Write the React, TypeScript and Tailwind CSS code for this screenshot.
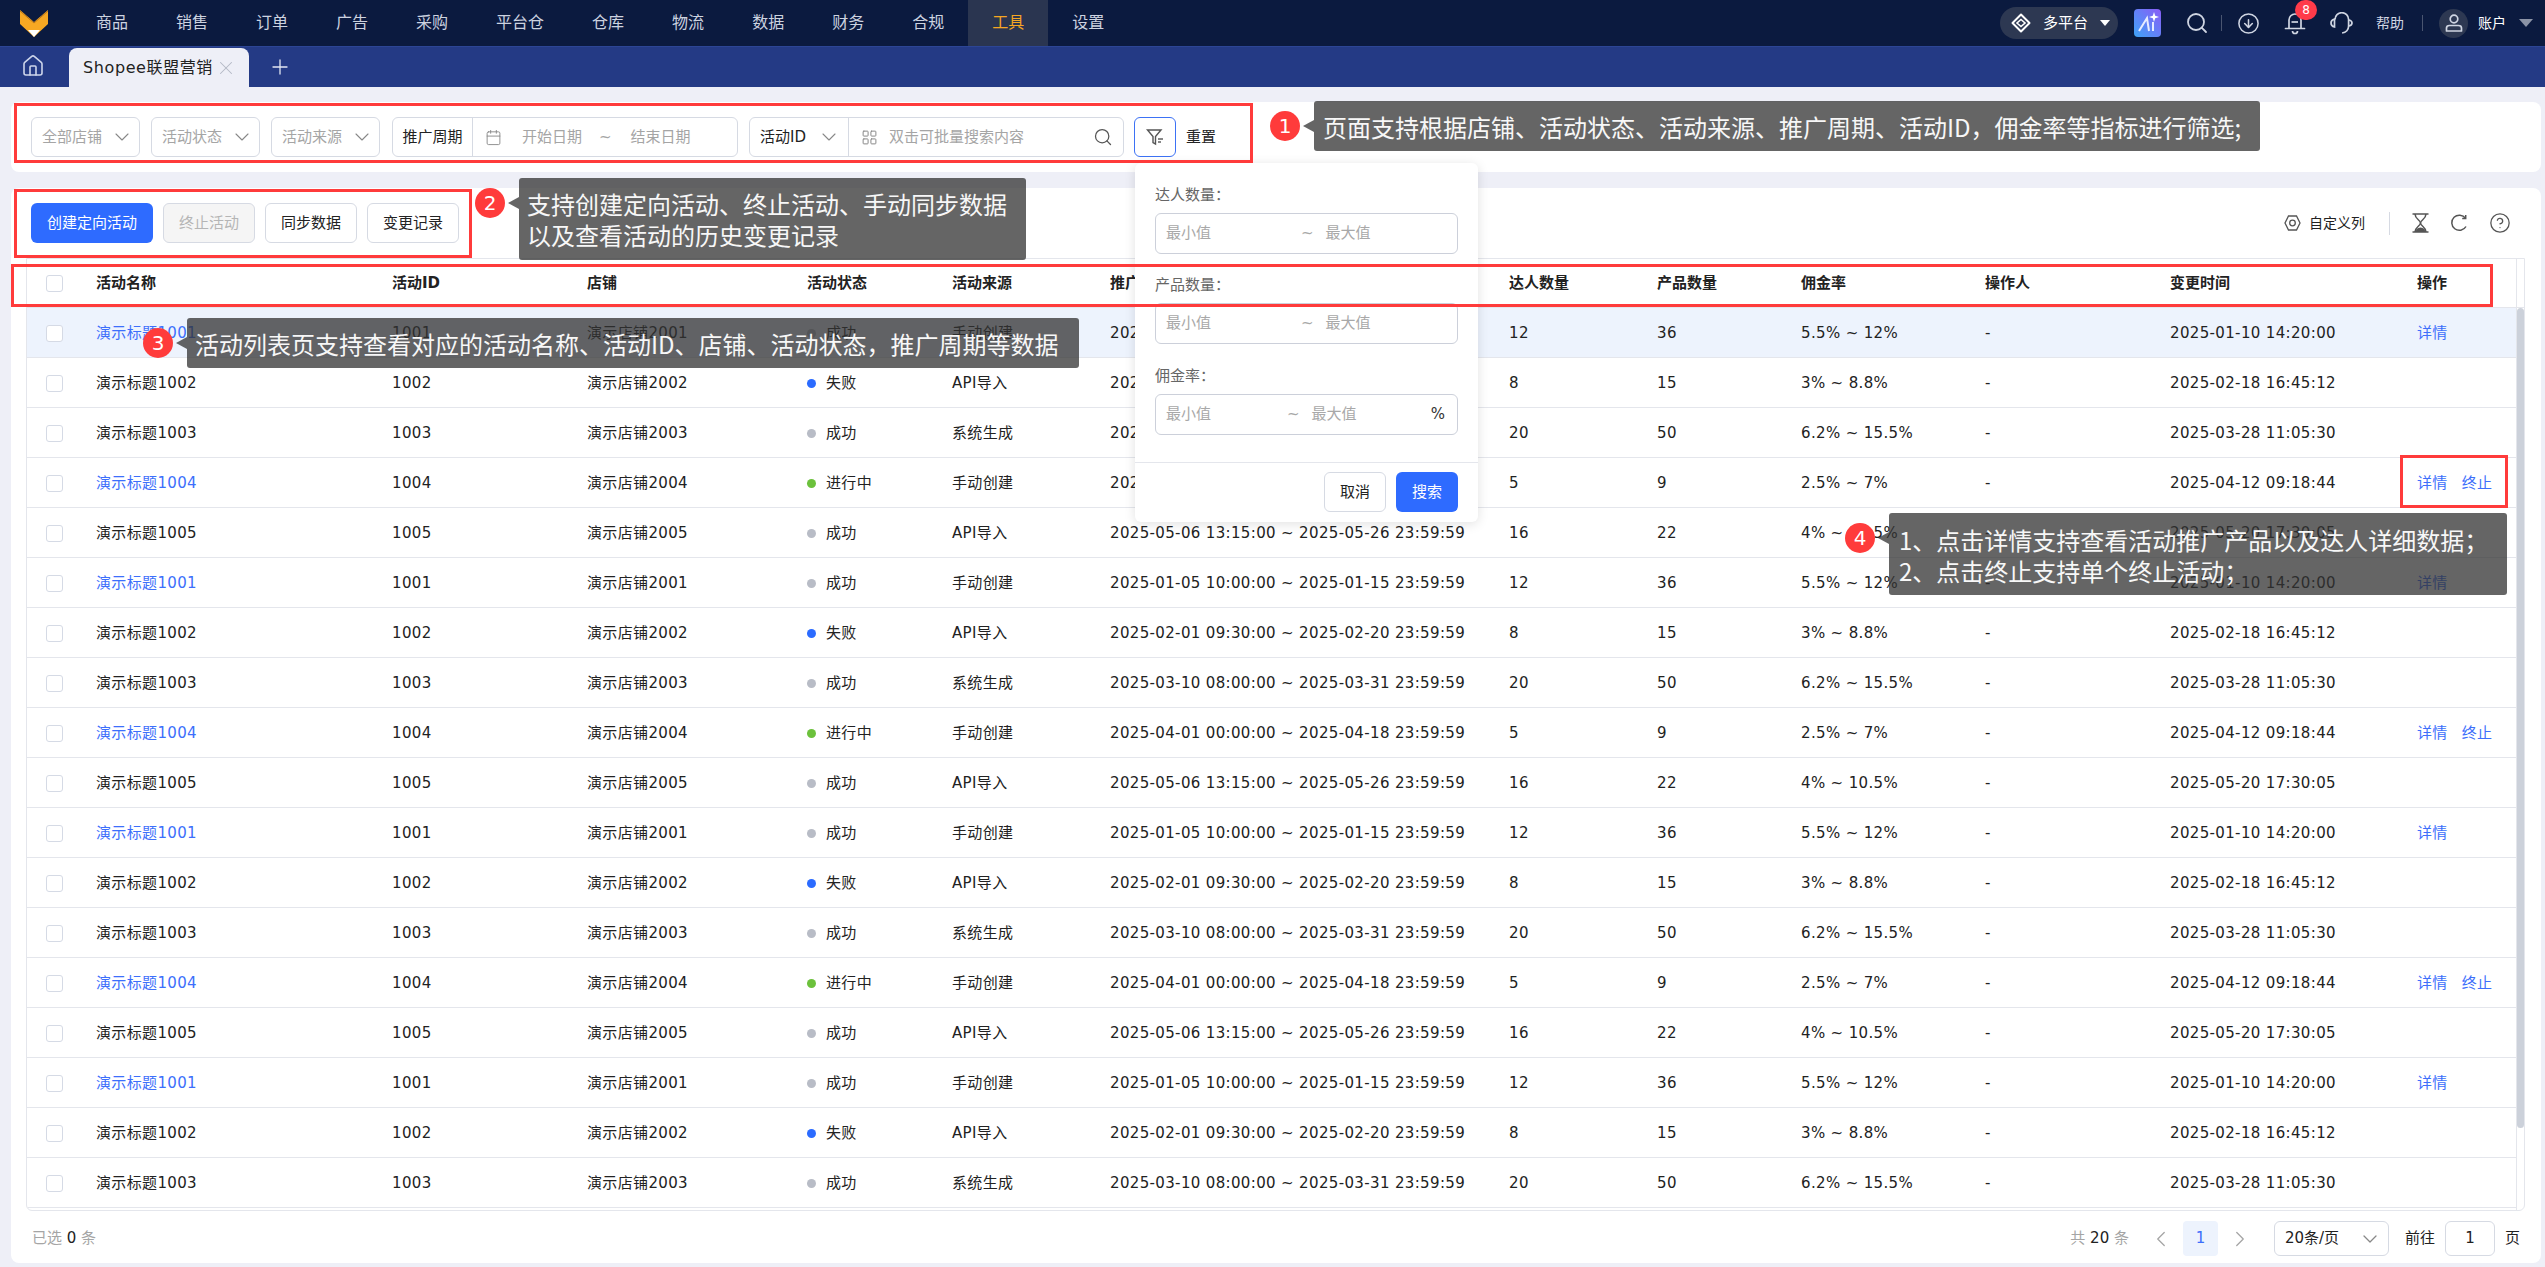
import {
  Calendar,
  ChevronDown,
  ChevronLeft,
  ChevronRight,
  CircleArrowDown,
  CircleHelp,
  House,
  LayoutGrid,
  Plus,
  Search,
  X,
} from "lucide-react";

const navItems = ["商品", "销售", "订单", "广告", "采购", "平台仓", "仓库", "物流", "数据", "财务", "合规", "工具", "设置"];

const rowCols =
  "grid grid-cols-[53px_296px_195px_220px_145px_158px_399px_148px_144px_184px_185px_247px_115px] items-center";

const headers = ["活动名称", "活动ID", "店铺", "活动状态", "活动来源", "推广周期", "达人数量", "产品数量", "佣金率", "操作人", "变更时间", "操作"];

const samples = [
  { id: "1001", link: true, status: "成功", dot: "bg-[#b8bcc6]", source: "手动创建", period: "2025-01-05 10:00:00 ~ 2025-01-15 23:59:59", people: 12, products: 36, rate: "5.5% ~ 12%", time: "2025-01-10 14:20:00", detail: true, stop: false },
  { id: "1002", link: false, status: "失败", dot: "bg-[#2b6bff]", source: "API导入", period: "2025-02-01 09:30:00 ~ 2025-02-20 23:59:59", people: 8, products: 15, rate: "3% ~ 8.8%", time: "2025-02-18 16:45:12", detail: false, stop: false },
  { id: "1003", link: false, status: "成功", dot: "bg-[#b8bcc6]", source: "系统生成", period: "2025-03-10 08:00:00 ~ 2025-03-31 23:59:59", people: 20, products: 50, rate: "6.2% ~ 15.5%", time: "2025-03-28 11:05:30", detail: false, stop: false },
  { id: "1004", link: true, status: "进行中", dot: "bg-[#6cc13c]", source: "手动创建", period: "2025-04-01 00:00:00 ~ 2025-04-18 23:59:59", people: 5, products: 9, rate: "2.5% ~ 7%", time: "2025-04-12 09:18:44", detail: true, stop: true },
  { id: "1005", link: false, status: "成功", dot: "bg-[#b8bcc6]", source: "API导入", period: "2025-05-06 13:15:00 ~ 2025-05-26 23:59:59", people: 16, products: 22, rate: "4% ~ 10.5%", time: "2025-05-20 17:30:05", detail: false, stop: false },
];

const rows = Array.from({ length: 18 }, (_, i) => samples[i % 5]);

function Logo() {
  return (
    <svg width="28" height="27" viewBox="0 0 28 27" className="ml-5">
      <polygon points="0,0 14,12 28,0 28,14 14,27 0,14" fill="#f7a823" />
      <polyline points="0,1 14,13 28,1" fill="none" stroke="#b9761a" strokeWidth="1" />
      <polygon points="8,20 20,20 14,27" fill="#ffffff" />
    </svg>
  );
}

function PlatformIcon() {
  return (
    <svg width="20" height="20" viewBox="0 0 20 20" fill="none" stroke="#ffffff" strokeWidth="2">
      <polygon points="10,1.5 18.5,10 10,18.5 1.5,10" strokeLinejoin="round" />
      <polygon points="10,6.5 14,10 10,13.5 6,10" strokeWidth="1.6" />
    </svg>
  );
}

function AiIcon() {
  return (
    <svg width="27" height="28" viewBox="0 0 27 28" className="ml-4">
      <defs>
        <linearGradient id="ai-bg" x1="0" y1="1" x2="1" y2="0">
          <stop offset="0" stopColor="#3ea4f8" />
          <stop offset="1" stopColor="#8a5cf6" />
        </linearGradient>
      </defs>
      <rect width="27" height="28" rx="4" fill="url(#ai-bg)" />
      <path d="M5 22 L13 9 L15 22" fill="none" stroke="#e6ecff" strokeWidth="2" />
      <line x1="19" y1="13" x2="19" y2="22" stroke="#e6ecff" strokeWidth="2" />
      <path d="M20 3 L21.2 6.8 L25 8 L21.2 9.2 L20 13 L18.8 9.2 L15 8 L18.8 6.8 Z" fill="#ffffff" />
    </svg>
  );
}

function BellIcon() {
  return (
    <svg width="22" height="24" viewBox="0 0 22 24" fill="none" stroke="currentColor" strokeWidth="1.7">
      <path d="M5 17 V9 a6 6 0 0 1 12 0 V17" />
      <line x1="1.5" y1="17.5" x2="20.5" y2="17.5" strokeLinecap="round" />
      <line x1="7.5" y1="11" x2="14" y2="11" />
      <path d="M8.5 20 a2.5 2.5 0 0 0 5 0" />
    </svg>
  );
}

function HeadsetIcon() {
  return (
    <svg width="23" height="22" viewBox="0 0 23 22" fill="none" stroke="currentColor" strokeWidth="1.7" className="ml-6">
      <path d="M5 7.5 a6.8 6.8 0 0 1 13.6 0 V14 c0 3.5 -2.5 6.5 -6.5 7" />
      <path d="M4.5 7 C2.5 7.5 1 9 1 11 S2.5 14.5 4.5 15 Z" />
      <path d="M19 8 C21 8.5 22 9.5 22 11 S21 13.5 19 14" />
    </svg>
  );
}

function UserIcon() {
  return (
    <svg width="18" height="18" viewBox="0 0 18 18" fill="none" stroke="#cfd5e2" strokeWidth="1.7">
      <circle cx="9" cy="5" r="3.8" />
      <path d="M1.5 17 V14 Q1.5 11.5 4.5 11.5 H13.5 Q16.5 11.5 16.5 14 V17 Z" strokeLinejoin="round" />
    </svg>
  );
}

function HexIcon() {
  return (
    <svg width="17" height="16" viewBox="0 0 17 16" fill="none" stroke="#555" strokeWidth="1.3">
      <polygon points="4.5,1 12.5,1 16,8 12.5,15 4.5,15 1,8" />
      <circle cx="8.5" cy="8" r="2.8" />
    </svg>
  );
}

function FilterIcon() {
  return (
    <svg width="18" height="18" viewBox="0 0 18 18" fill="none" stroke="#555" strokeWidth="1.4">
      <path d="M1.5 2 H15 L9.5 8.5 V16 L7 14.5 V8.5 Z" />
      <line x1="12" y1="11" x2="17" y2="11" />
      <line x1="12" y1="14" x2="15" y2="14" />
    </svg>
  );
}

function HourglassIcon() {
  return (
    <svg width="17" height="20" viewBox="0 0 17 20" fill="none" stroke="#555" strokeWidth="1.5" className="ml-[22px]">
      <line x1="0.5" y1="1" x2="16.5" y2="1" />
      <line x1="0.5" y1="19" x2="16.5" y2="19" />
      <path d="M3 1 C3 6 8.5 7 8.5 10 C8.5 13 3 14 3 19" />
      <path d="M14 1 C14 6 8.5 7 8.5 10 C8.5 13 14 14 14 19" />
      <path d="M4.5 16 Q8.5 13 12.5 16 L13.5 19 H3.5 Z" fill="#555" stroke="none" />
    </svg>
  );
}

function RefreshIcon() {
  return (
    <svg width="18" height="18" viewBox="0 0 18 18" fill="none" stroke="#555" strokeWidth="1.5">
      <path d="M15.5 4.2 A7.6 7.6 0 1 0 16 12.5" />
      <polyline points="15.7,1 15.7,4.6 12.2,4.6" />
    </svg>
  );
}

function Select({ label }: { label: string }) {
  return (
    <div className="flex h-10 w-[109px] items-center justify-between rounded-md border border-[#d6dae3] pl-2.5 pr-[5px] text-[15px] text-[#a5a5a5]">
      <span>{label}</span>
      <ChevronDown size={24} strokeWidth={1.1} className="text-[#888]" />
    </div>
  );
}

function RangeField({ gap, suffix }: { gap: string; suffix?: boolean }) {
  return (
    <div className="flex h-[41px] items-center rounded-md border border-[#ccd0da] pl-2.5 pr-3 text-[15px] text-[#a8a8a8]">
      <span>最小值</span>
      <span className={gap}>~</span>
      <span className="ml-3">最大值</span>
      {suffix && <span className="ml-auto text-[#333]">%</span>}
    </div>
  );
}

function Note({
  num,
  className,
  children,
}: {
  num: string;
  className: string;
  children: React.ReactNode;
}) {
  return (
    <div className={`absolute z-30 flex items-start ${className}`}>
      <span className="mt-2.5 flex h-[30px] w-[30px] shrink-0 items-center justify-center rounded-full bg-[#ff3b3b] text-[20px] leading-none text-white">
        {num}
      </span>
      <span className="mt-[19px] ml-[3px] h-0 w-0 border-y-[6px] border-r-[11px] border-y-transparent border-r-[rgba(50,50,50,0.75)]" />
      <div className="rounded-[3px] bg-[rgba(50,50,50,0.75)] font-['Noto_Sans_CJK_SC',sans-serif] text-[24px] leading-[31px] whitespace-nowrap text-[#f7f7f7]">
        {children}
      </div>
    </div>
  );
}

export default function App() {
  return (
    <div className="relative h-[1267px] w-[2545px] overflow-hidden bg-[#eeeff7] font-['DejaVu_Sans','Noto_Sans_CJK_SC',sans-serif] text-[15px] text-[#222]">
      {/* top nav */}
      <header className="flex h-[46px] items-center bg-[#0b1a3f] pr-3">
        <Logo />
        <nav className="ml-6 flex h-full">
          {navItems.map((item) => (
            <div
              key={item}
              className={`flex h-full items-center px-6 text-base ${item === "工具" ? "bg-[#2a3550] text-[#f5a623]" : "text-[#cdd3e0]"}`}
            >
              {item}
            </div>
          ))}
        </nav>
        <div className="ml-auto flex items-center text-[#cfd5e2]">
          <div className="flex h-8 w-[118px] items-center rounded-full bg-[#2d3852] pl-[11px] text-[15px] text-white">
            <PlatformIcon />
            <span className="ml-3">多平台</span>
            <span className="ml-3 h-0 w-0 border-x-[5px] border-t-[6px] border-x-transparent border-t-white" />
          </div>
          <AiIcon />
          <Search size={24} strokeWidth={1.8} className="ml-6" />
          <span className="ml-3 h-[16px] w-px bg-[#4a5570]" />
          <CircleArrowDown size={23} strokeWidth={1.6} className="ml-[15px]" />
          <div className="relative ml-6">
            <BellIcon />
            <span className="absolute -top-[11px] left-[11px] flex h-5 w-[22px] items-center justify-center rounded-full bg-[#ff3b4a] text-xs text-white">
              8
            </span>
          </div>
          <HeadsetIcon />
          <span className="ml-[23px] text-sm">帮助</span>
          <span className="ml-[18px] h-[16px] w-px bg-[#4a5570]" />
          <span className="ml-4 flex h-[29px] w-[29px] items-center justify-center rounded-full bg-[#2d3852]">
            <UserIcon />
          </span>
          <span className="ml-2.5 text-sm text-white">账户</span>
          <span className="ml-[13px] h-0 w-0 border-x-[7px] border-t-[8px] border-x-transparent border-t-[#8b93a6]" />
        </div>
      </header>

      {/* tab bar */}
      <div className="flex h-[41px] items-end border-t border-[#2c4595] bg-[#243a85] text-[#cdd5ea]">
        <House size={24} strokeWidth={1.6} className="mb-[9px] ml-[21px]" />
        <div className="ml-6 flex h-[39px] w-[180px] items-center rounded-t-lg bg-[#eeeff7] pl-[14px] text-base tracking-[0.6px] text-[#222]">
          <span>Shopee联盟营销</span>
          <X size={22} strokeWidth={1.1} className="ml-[2px] text-[#b3b8c6]" />
        </div>
        <Plus size={24} strokeWidth={1.3} className="mb-[8px] ml-[19px] text-[#e2e6f2]" />
      </div>

      <main className="pt-[15px] pl-[11px] pr-1">
        {/* filter card */}
        <section className="flex h-[70px] items-start gap-[11px] rounded-lg bg-white pl-5 pt-[15px]">
          <Select label="全部店铺" />
          <Select label="活动状态" />
          <Select label="活动来源" />
          <div className="ml-px flex h-10 w-[346px] items-center rounded-md border border-[#d6dae3]">
            <div className="flex h-full w-20 items-center justify-center border-r border-[#d6dae3] text-[15px] text-[#222]">推广周期</div>
            <Calendar size={17} strokeWidth={1.3} className="ml-3 text-[#888]" />
            <span className="ml-5 text-[#a5a5a5]">开始日期</span>
            <span className="ml-[17px] text-[#a5a5a5]">~</span>
            <span className="ml-[19px] text-[#a5a5a5]">结束日期</span>
          </div>
          <div className="flex h-10 w-[375px] items-center rounded-md border border-[#d6dae3]">
            <div className="flex h-full w-[99px] items-center justify-between border-r border-[#d6dae3] pl-2.5 pr-[7px] text-[#222]">
              <span>活动ID</span>
              <ChevronDown size={24} strokeWidth={1.1} className="text-[#888]" />
            </div>
            <LayoutGrid size={17} strokeWidth={1.4} className="ml-3 text-[#888]" />
            <span className="ml-[11px] text-[#a5a5a5]">双击可批量搜索内容</span>
            <Search size={20} strokeWidth={1.5} className="ml-auto mr-2.5 text-[#555]" />
          </div>
          <div className="-ml-px flex h-10 w-[42px] items-center justify-center rounded-md border border-[#3d72f5]">
            <FilterIcon />
          </div>
          <div className="-ml-px flex h-10 items-center text-[#222]">重置</div>
        </section>

        {/* list card */}
        <section className="mt-4 h-[1075px] rounded-lg bg-white pl-[15px] pr-4 pt-[15px]">
          <div className="flex h-10 items-center gap-2.5 pl-[5px]">
            <button className="h-10 w-[122px] rounded-md bg-[#2e6bff] text-white">创建定向活动</button>
            <button className="h-10 w-[92px] rounded-md border border-[#d6dae3] bg-[#f5f5f5] text-[#b5b5b5]">终止活动</button>
            <button className="h-10 w-[92px] rounded-md border border-[#d6dae3]">同步数据</button>
            <button className="h-10 w-[92px] rounded-md border border-[#d6dae3]">变更记录</button>
            <div className="ml-auto flex items-center pr-3.5 text-[#555]">
              <HexIcon />
              <span className="ml-2 text-sm text-[#222]">自定义列</span>
              <span className="ml-6 h-[23px] w-px bg-[#d6dae3]" />
              <HourglassIcon />
              <span className="ml-[21px]"><RefreshIcon /></span>
              <CircleHelp size={22} strokeWidth={1.4} className="ml-[21px]" />
            </div>
          </div>

          {/* table */}
          <div className="mt-[15px] flex h-[953px] overflow-hidden rounded-b-md border border-[#e4e6ec]">
            <div className="w-[2489px]">
              <div className={`${rowCols} h-[49px] border-b border-[#e4e6ec] font-bold`}>
                <div className="flex justify-center pl-[2px]">
                  <span className="h-[17px] w-[17px] rounded-[3px] border border-[#d5dae5]" />
                </div>
                {headers.map((h) => (
                  <div key={h} className="pl-4">{h}</div>
                ))}
              </div>
              {rows.map((row, i) => (
                <div
                  key={i}
                  className={`${rowCols} h-[50px] border-b border-[#e4e6ec] pt-px tracking-[0.35px] ${i === 0 ? "bg-[#edf3fd]" : ""}`}
                >
                  <div className="flex justify-center pl-[2px]">
                    <span className="h-[17px] w-[17px] rounded-[3px] border border-[#d5dae5] bg-white" />
                  </div>
                  <div className={`pl-4 ${row.link ? "text-[#3d6ffb]" : ""}`}>演示标题{row.id}</div>
                  <div className="pl-4">{row.id}</div>
                  <div className="pl-4">演示店铺{Number(row.id) + 1000}</div>
                  <div className="flex items-center gap-2.5 pl-4">
                    <span className={`h-[9px] w-[9px] rounded-full ${row.dot}`} />
                    {row.status}
                  </div>
                  <div className="pl-4">{row.source}</div>
                  <div className="pl-4 whitespace-nowrap">{row.period}</div>
                  <div className="pl-4">{row.people}</div>
                  <div className="pl-4">{row.products}</div>
                  <div className="pl-4">{row.rate}</div>
                  <div className="pl-4">-</div>
                  <div className="pl-4 whitespace-nowrap">{row.time}</div>
                  <div className="flex gap-3.5 pl-4 text-[#3d6ffb]">
                    {row.detail && <span>详情</span>}
                    {row.stop && <span>终止</span>}
                  </div>
                </div>
              ))}
            </div>
            <div className="w-[9px] border-l border-[#e4e6ec]">
              <div className="h-[49px] border-b border-[#e4e6ec]" />
              <div className="h-[820px] rounded-full bg-[#ccd1da]" />
            </div>
          </div>

          {/* footer */}
          <div className="mt-2.5 flex h-[35px] items-center pl-[6px] pr-[5px]">
            <span className="text-[#a5a5a5]">已选 <span className="text-[#222]">0</span> 条</span>
            <span className="ml-auto text-[#a5a5a5]">共 <span className="text-[#222]">20</span> 条</span>
            <ChevronLeft size={26} strokeWidth={1.2} className="ml-[19px] text-[#a5a5a5]" />
            <span className="ml-[9px] flex h-[35px] w-[35px] items-center justify-center rounded bg-[#edf3fd] text-[#3d6ffb]">1</span>
            <ChevronRight size={26} strokeWidth={1.2} className="ml-[9px] text-[#a5a5a5]" />
            <div className="ml-[21px] flex h-[35px] w-[115px] items-center justify-between rounded-md border border-[#d6dae3] pl-2.5 pr-1.5">
              <span>20条/页</span>
              <ChevronDown size={24} strokeWidth={1.3} className="text-[#888]" />
            </div>
            <span className="ml-4">前往</span>
            <span className="ml-2.5 flex h-[35px] w-[50px] items-center justify-center rounded-md border border-[#d6dae3]">1</span>
            <span className="ml-2.5">页</span>
          </div>
        </section>
      </main>

      {/* filter popover */}
      <div className="absolute top-[163px] left-[1135px] z-10 flex h-[359px] w-[343px] flex-col rounded-md bg-white shadow-[0_2px_12px_rgba(0,0,0,0.12)]">
        <div className="flex-1 px-5 pt-[22px] text-[#666]">
          <div className="leading-5">达人数量：</div>
          <div className="mt-2"><RangeField gap="ml-[90px]" /></div>
          <div className="mt-[21px] leading-5">产品数量：</div>
          <div className="mt-2"><RangeField gap="ml-[90px]" /></div>
          <div className="mt-[22px] leading-5">佣金率：</div>
          <div className="mt-2"><RangeField gap="ml-[76px]" suffix /></div>
        </div>
        <div className="flex h-[60px] items-start justify-end gap-2.5 border-t border-[#e4e6ec] pr-5 pt-[9px]">
          <button className="h-10 w-[62px] rounded-md border border-[#d6dae3] text-[#222]">取消</button>
          <button className="h-10 w-[62px] rounded-md bg-[#2e6bff] text-white">搜索</button>
        </div>
      </div>

      {/* red annotation frames */}
      <div className="absolute top-[103px] left-[14px] z-20 h-[60px] w-[1239px] border-[3px] border-[#ff3b3b]" />
      <div className="absolute top-[189px] left-[14px] z-20 h-[69px] w-[458px] border-[3px] border-[#ff3b3b]" />
      <div className="absolute top-[264px] left-[11px] z-20 h-[43px] w-[2482px] border-[3px] border-[#ff3b3b]" />
      <div className="absolute top-[455px] left-[2400px] z-20 h-[53px] w-[108px] border-[3px] border-[#ff3b3b]" />

      {/* annotations */}
      <Note num="1" className="top-[101px] left-[1270px]">
        <div className="flex h-[50px] w-[946px] items-center pl-[9px]">页面支持根据店铺、活动状态、活动来源、推广周期、活动ID，佣金率等指标进行筛选;</div>
      </Note>
      <Note num="2" className="top-[178px] left-[475px]">
        <div className="h-[82px] w-[507px] pl-2 pt-[10px]">
          支持创建定向活动、终止活动、手动同步数据
          <br />
          以及查看活动的历史变更记录
        </div>
      </Note>
      <Note num="3" className="top-[318px] left-[143px]">
        <div className="flex h-[50px] w-[892px] items-center pl-2">活动列表页支持查看对应的活动名称、活动ID、店铺、活动状态，推广周期等数据</div>
      </Note>
      <Note num="4" className="top-[513px] left-[1845px]">
        <div className="h-[82px] w-[618px] pl-2.5 pt-[11px]">
          1、点击详情支持查看活动推广产品以及达人详细数据；
          <br />
          2、点击终止支持单个终止活动；
        </div>
      </Note>
    </div>
  );
}
